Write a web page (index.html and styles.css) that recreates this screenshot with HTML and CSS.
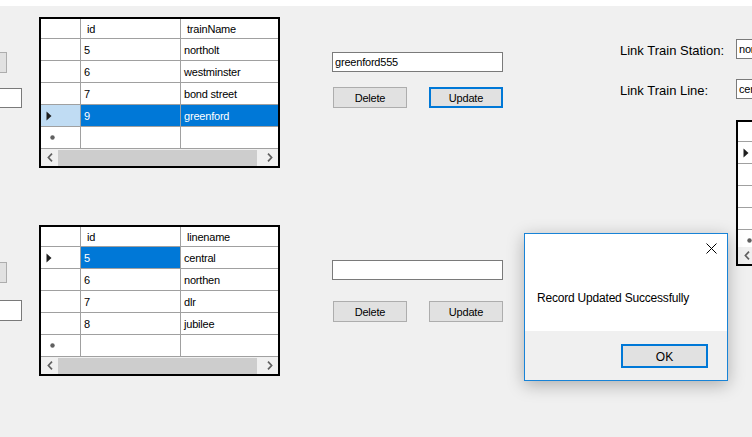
FILE: index.html
```html
<!DOCTYPE html>
<html lang="en">
<head>
<meta charset="utf-8">
<title>Train Stations</title>
<link rel="stylesheet" href="styles.css">
</head>
<body>
<div class="topstrip"></div>
<div class="form">
  <div class="col col-left">
    <div class="btn btn-clip b1"></div>
    <div class="tb tb-clip t1"></div>
    <div class="btn btn-clip b2"></div>
    <div class="tb tb-clip t2"></div>
  </div>

  <div class="col col-grids">
    <div class="dgv g1">
      <div class="dgv-body">
        <div class="row head"><div class="rh"></div><div class="cell">id</div><div class="cell">trainName</div></div>
        <div class="row"><div class="rh"></div><div class="cell">5</div><div class="cell">northolt</div></div>
        <div class="row"><div class="rh"></div><div class="cell">6</div><div class="cell">westminster</div></div>
        <div class="row"><div class="rh"></div><div class="cell">7</div><div class="cell">bond street</div></div>
        <div class="row"><div class="rh rh-sel"><svg class="tri" width="6" height="10" viewBox="0 0 6 10"><path d="M0.5 0.5 L5.5 5 L0.5 9.5 Z" fill="#1e1e1e"/></svg></div><div class="cell sel">9</div><div class="cell sel">greenford</div></div>
        <div class="row"><div class="rh"><svg class="star" width="5" height="5" viewBox="0 0 5 5"><circle cx="2.5" cy="2.5" r="2.2" fill="#606060"/></svg></div><div class="cell"></div><div class="cell"></div></div>
      </div>
      <div class="hscroll">
        <div class="sb-btn"><svg width="6" height="9" viewBox="0 0 6 9"><path d="M5 0.7 L1.4 4.5 L5 8.3" fill="none" stroke="#606060" stroke-width="1.7"/></svg></div>
        <div class="sb-track"><div class="sb-thumb"></div></div>
        <div class="sb-btn"><svg width="6" height="9" viewBox="0 0 6 9"><path d="M1 0.7 L4.6 4.5 L1 8.3" fill="none" stroke="#606060" stroke-width="1.7"/></svg></div>
      </div>
    </div>

    <div class="dgv g2">
      <div class="dgv-body">
        <div class="row head"><div class="rh"></div><div class="cell">id</div><div class="cell">linename</div></div>
        <div class="row"><div class="rh"><svg class="tri" width="6" height="10" viewBox="0 0 6 10"><path d="M0.5 0.5 L5.5 5 L0.5 9.5 Z" fill="#1e1e1e"/></svg></div><div class="cell sel">5</div><div class="cell">central</div></div>
        <div class="row"><div class="rh"></div><div class="cell">6</div><div class="cell">northen</div></div>
        <div class="row"><div class="rh"></div><div class="cell">7</div><div class="cell">dlr</div></div>
        <div class="row"><div class="rh"></div><div class="cell">8</div><div class="cell">jubilee</div></div>
        <div class="row"><div class="rh"><svg class="star" width="5" height="5" viewBox="0 0 5 5"><circle cx="2.5" cy="2.5" r="2.2" fill="#606060"/></svg></div><div class="cell"></div><div class="cell"></div></div>
      </div>
      <div class="hscroll">
        <div class="sb-btn"><svg width="6" height="9" viewBox="0 0 6 9"><path d="M5 0.7 L1.4 4.5 L5 8.3" fill="none" stroke="#606060" stroke-width="1.7"/></svg></div>
        <div class="sb-track"><div class="sb-thumb"></div></div>
        <div class="sb-btn"><svg width="6" height="9" viewBox="0 0 6 9"><path d="M1 0.7 L4.6 4.5 L1 8.3" fill="none" stroke="#606060" stroke-width="1.7"/></svg></div>
      </div>
    </div>
  </div>

  <div class="col col-edit">
    <div class="tb wide e1">greenford555</div>
    <div class="btnrow r1"><div class="btn">Delete</div><div class="btn focus">Update</div></div>
    <div class="tb wide e2"></div>
    <div class="btnrow r2"><div class="btn">Delete</div><div class="btn">Update</div></div>
  </div>

  <div class="col col-right">
    <div class="field f1"><span class="lbl">Link Train Station:</span><div class="tb tb-right">northolt</div></div>
    <div class="field f2"><span class="lbl">Link Train Line:</span><div class="tb tb-right">central</div></div>
    <div class="dgv g3">
      <div class="dgv-body">
        <div class="row head"><div class="rh"></div><div class="cell"></div><div class="cell"></div></div>
        <div class="row"><div class="rh"><svg class="tri" width="6" height="10" viewBox="0 0 6 10"><path d="M0.5 0.5 L5.5 5 L0.5 9.5 Z" fill="#1e1e1e"/></svg></div><div class="cell"></div><div class="cell"></div></div>
        <div class="row"><div class="rh"></div><div class="cell"></div><div class="cell"></div></div>
        <div class="row"><div class="rh"></div><div class="cell"></div><div class="cell"></div></div>
        <div class="row"><div class="rh"></div><div class="cell"></div><div class="cell"></div></div>
        <div class="row"><div class="rh"><svg class="star" width="5" height="5" viewBox="0 0 5 5"><circle cx="2.5" cy="2.5" r="2.2" fill="#606060"/></svg></div><div class="cell"></div><div class="cell"></div></div>
      </div>
      <div class="hscroll">
        <div class="sb-btn"><svg width="6" height="9" viewBox="0 0 6 9"><path d="M5 0.7 L1.4 4.5 L5 8.3" fill="none" stroke="#606060" stroke-width="1.7"/></svg></div>
        <div class="sb-track"><div class="sb-thumb"></div></div>
        <div class="sb-btn"><svg width="6" height="9" viewBox="0 0 6 9"><path d="M1 0.7 L4.6 4.5 L1 8.3" fill="none" stroke="#606060" stroke-width="1.7"/></svg></div>
      </div>
    </div>
  </div>

  <div class="msgbox">
    <div class="msg-body">
      <div class="msg-title"><svg class="close" width="11" height="11" viewBox="0 0 11 11"><path d="M0.5 0.5 L10.5 10.5 M10.5 0.5 L0.5 10.5" stroke="#000" stroke-width="1" fill="none"/></svg></div>
      <div class="msg-text">Record Updated Successfully</div>
    </div>
    <div class="msg-foot"><div class="btn focus ok">OK</div></div>
  </div>
</div>
</body>
</html>
```

FILE: styles.css
```css
* { box-sizing: border-box; }
html, body {
  margin: 0;
  padding: 0;
}
body {
  width: 752px;
  height: 437px;
  overflow: hidden;
  background: #f0f0f0;
  font-family: "Liberation Sans", Arial, sans-serif;
  font-size: 11px;
  letter-spacing: -0.2px;
  color: #000;
}
.topstrip {
  height: 6px;
  background: #ffffff;
}
.form {
  position: relative;
  display: flex;
  height: 431px;
}
.col {
  flex: none;
  display: flex;
  flex-direction: column;
  align-items: flex-start;
}
.col-left { width: 39px; }
.col-grids { width: 293px; }
.col-edit { width: 288px; }
.col-right { width: 300px; }

/* generic controls */
.btn {
  width: 74px;
  height: 21px;
  background: #e1e1e1;
  border: 1px solid #adadad;
  display: flex;
  align-items: center;
  justify-content: center;
  line-height: 1;
  padding-top: 1px;
  flex: none;
}
.btn.focus {
  border: 2px solid #0078d7;
}
.tb {
  height: 20px;
  background: #fff;
  border: 1px solid #7a7a7a;
  padding-left: 2px;
  line-height: 18px;
  white-space: nowrap;
  overflow: hidden;
  flex: none;
}

/* left clipped controls */
.btn-clip { width: 75px; margin-left: -68px; }
.tb-clip { width: 80px; margin-left: -58px; }
.b1 { margin-top: 46px; }
.t1 { margin-top: 15px; }
.b2 { margin-top: 154px; }
.t2 { margin-top: 17px; height: 21px; }

/* data grids */
.dgv {
  width: 241px;
  height: 151px;
  border: 2px solid #000;
  background: #fff;
  display: flex;
  flex-direction: column;
  overflow: hidden;
  flex: none;
}
.g1 { margin-top: 11px; }
.g2 { margin-top: 57px; }
.g3 { margin-top: 21px; margin-left: 116px; height: 146px; }
.dgv-body {
  flex: 1;
  overflow: hidden;
}
.row {
  display: flex;
  height: 22px;
  border-bottom: 1px solid #a0a0a0;
}
.row.head { height: 20px; }
.rh {
  width: 40px;
  flex: none;
  border-right: 1px solid #a0a0a0;
  display: flex;
  align-items: center;
}
.rh-sel { background: #c0dcf3; }
.tri { margin-left: 5px; display: block; }
.star { margin-left: 9px; display: block; }
.cell {
  width: 100px;
  flex: none;
  border-right: 1px solid #a0a0a0;
  padding-left: 3px;
  padding-top: 1px;
  line-height: 20px;
  white-space: nowrap;
  overflow: hidden;
}
.head .cell {
  padding-left: 6px;
  line-height: 18px;
}
.cell.sel {
  background: #0078d7;
  color: #fff;
}
.hscroll {
  height: 17px;
  flex: none;
  display: flex;
  background: #f0f0f0;
}
.sb-btn {
  width: 17px;
  flex: none;
  display: flex;
  align-items: center;
  justify-content: center;
}
.sb-btn svg { display: block; }
.sb-track {
  flex: 1;
  padding-top: 1px;
}
.sb-thumb {
  width: 199px;
  height: 16px;
  background: #cdcdcd;
}

/* edit column */
.wide { width: 171px; }
.e1 { margin-top: 46px; }
.e2 { margin-top: 152px; }
.btnrow {
  display: flex;
  gap: 22px;
  margin-left: 1px;
}
.r1 { margin-top: 15px; }
.r2 { margin-top: 21px; }

/* right column */
.field {
  display: flex;
  align-items: flex-start;
}
.f1 { margin-top: 33px; }
.f2 { margin-top: 20px; }
.lbl {
  width: 116px;
  flex: none;
  font-size: 13px;
  letter-spacing: 0;
  line-height: 15px;
  padding-top: 4px;
  white-space: nowrap;
}
.tb-right { width: 120px; }

/* message box window */
.msgbox {
  position: absolute;
  left: 524px;
  top: 227px;
  width: 204px;
  height: 148px;
  border: 1px solid #1883d7;
  background: #f0f0f0;
  box-shadow: 0 4px 16px rgba(0, 0, 0, 0.28);
  display: flex;
  flex-direction: column;
}
.msg-body {
  height: 97px;
  background: #fff;
  flex: none;
}
.msg-title {
  height: 30px;
  display: flex;
  justify-content: flex-end;
  padding-right: 10px;
  padding-top: 9px;
}
.close { display: block; }
.msg-text {
  margin-top: 27px;
  padding-left: 12px;
  font-size: 12px;
  line-height: 15px;
  letter-spacing: -0.2px;
  white-space: nowrap;
}
.msg-foot {
  flex: 1;
  display: flex;
  justify-content: flex-end;
  align-items: flex-start;
  padding-right: 19px;
  padding-top: 13px;
}
.ok {
  width: 87px;
  height: 24px;
  font-size: 12px;
  letter-spacing: 0;
}
```
